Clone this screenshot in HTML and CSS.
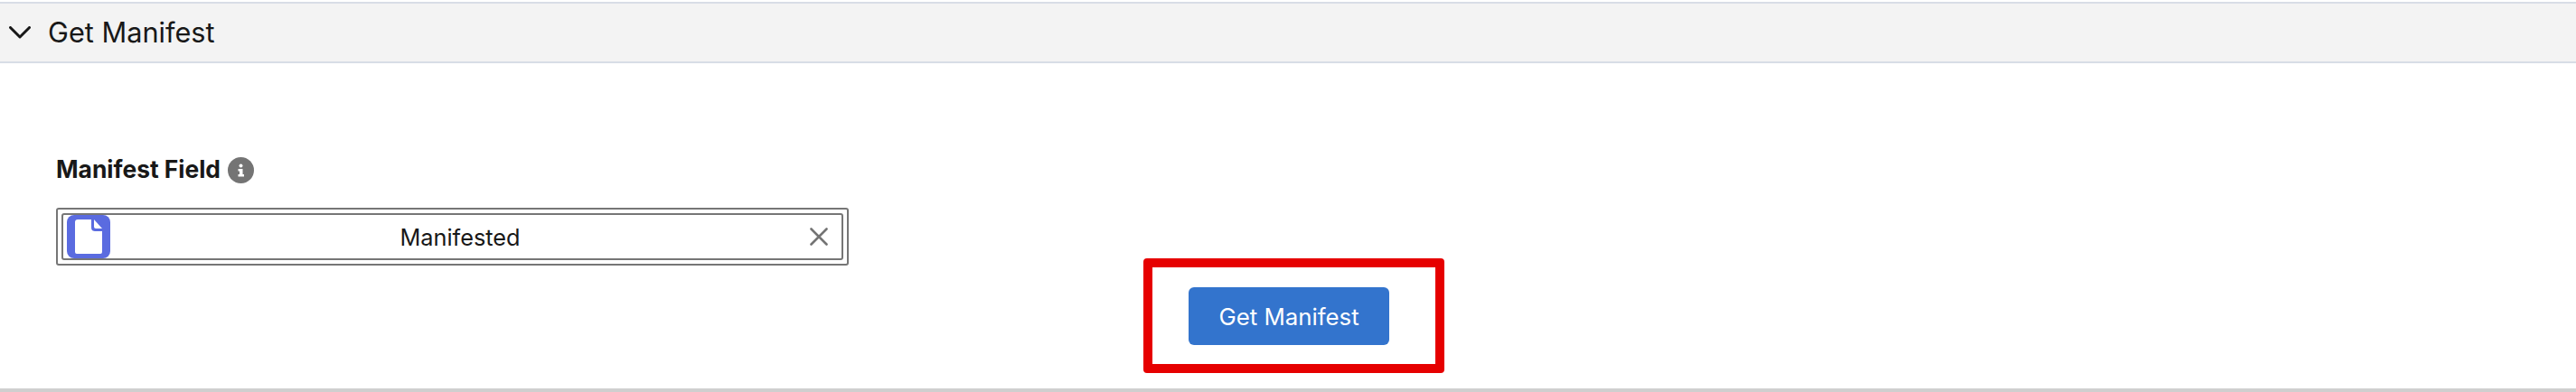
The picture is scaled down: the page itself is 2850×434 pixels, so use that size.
FILE: index.html
```html
<!DOCTYPE html>
<html lang="en">
<head>
  <meta charset="UTF-8" />
  <title>Get Manifest</title>
  <link rel="stylesheet" href="styles.css">
</head>
<body>
  <div class="section-header">
    <svg class="chevron" viewBox="0 0 24 14" width="24" height="14">
      <path d="M1.5 1.5 L12 12 L22.5 1.5" fill="none" stroke="#181818" stroke-width="3" stroke-linecap="round" stroke-linejoin="round"/>
    </svg>
    <span class="section-title">Get Manifest</span>
  </div>

  <div class="section-body">
    <div class="label-row">
      <span class="field-label">Manifest Field</span>
      <span class="info-icon">
        <svg viewBox="0 0 29 29" width="29" height="29">
          <circle cx="14.5" cy="14.5" r="14.5" fill="#747474"/>
          <circle cx="14.5" cy="9.5" r="2" fill="#fff"/>
          <path d="M11.5 13 H16.5 V19 H18 V21.5 H11.5 V19 H13 V15.5 H11.5 Z" fill="#fff"/>
        </svg>
      </span>
    </div>

    <div class="field-outer">
      <div class="field-inner">
        <span class="object-icon">
          <svg viewBox="0 0 48 48" width="48" height="48">
            <path d="M12 5 H27 V14 Q27 18 31 18 H39 V41 Q39 43 37 43 H11 Q9 43 9 41 V8 Q9 5 12 5 Z" fill="#fff"/>
            <path d="M30 5 L39 15 H32 Q30 15 30 13 Z" fill="#fff"/>
          </svg>
        </span>
        <span class="field-value">Manifested</span>
        <svg class="clear-icon" viewBox="0 0 20 20" width="20" height="20">
          <path d="M1.5 1.5 L18.5 18.5 M18.5 1.5 L1.5 18.5" fill="none" stroke="#747474" stroke-width="2.6" stroke-linecap="round"/>
        </svg>
      </div>
    </div>

    <div class="action-row">
      <div class="button-wrap">
        <button class="primary-btn">Get Manifest</button>
        <div class="highlight-box"></div>
      </div>
    </div>
  </div>
  <div class="bottom-line"></div>
</body>
</html>
```

FILE: styles.css
```css
html, body {
  margin: 0;
  padding: 0;
  background: #fff;
}
body {
  font-family: Inter, "Liberation Sans", sans-serif;
  color: #181818;
  height: 434px;
  overflow: hidden;
  display: flex;
  flex-direction: column;
}
.section-header {
  margin-top: 2px;
  height: 64px;
  background: #f3f3f3;
  border-top: 2px solid #d8dde6;
  border-bottom: 2px solid #d8dde6;
  display: flex;
  align-items: center;
  padding-left: 10px;
}
.chevron {
  margin-right: 19px;
}
.section-title {
  font-size: 30.7px;
  line-height: 36px;
}
.section-body {
  flex: 1;
  padding: 102px 0 0 62px;
}
.label-row {
  display: flex;
  align-items: center;
  height: 30px;
}
.field-label {
  font-size: 26.4px;
  font-weight: 700;
}
.info-icon {
  display: flex;
  margin-left: 8px;
  margin-top: 3px;
}
.field-outer {
  width: 865px;
  margin-top: 28px;
  padding: 4px;
  border: 2px solid #767676;
  border-radius: 3px;
}
.field-inner {
  height: 48px;
  padding: 0 4px;
  border: 2px solid #767676;
  border-radius: 3px;
  display: flex;
  align-items: center;
}
.object-icon {
  display: flex;
  width: 48px;
  height: 48px;
  background: #5a6be0;
  border-radius: 8px;
  flex: none;
}
.field-value {
  flex: 1;
  text-align: center;
  font-size: 25.3px;
}
.clear-icon {
  margin-right: 11px;
  flex: none;
}
.action-row {
  display: flex;
  margin-top: 24px;
  margin-left: 1253px;
}
.button-wrap {
  position: relative;
}
.primary-btn {
  width: 222px;
  height: 64px;
  border: none;
  border-radius: 6px;
  background: #3374cd;
  color: #fff;
  font-family: inherit;
  font-size: 25.8px;
  padding: 0;
}
.highlight-box {
  position: absolute;
  left: -50px;
  right: -61px;
  top: -32px;
  bottom: -31px;
  border: 10px solid #e60000;
  border-radius: 4px;
}
.bottom-line {
  height: 4px;
  background: #cfcfcf;
}
```
